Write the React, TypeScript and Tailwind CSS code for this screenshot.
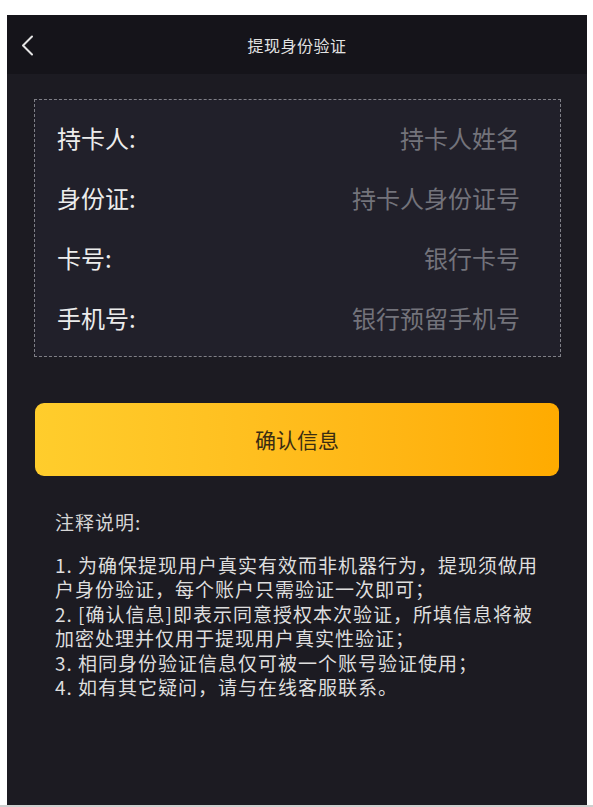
const font = { fontFamily: '"Noto Sans CJK SC", "Noto Sans", sans-serif' };

const fields = [
  { label: "持卡人:", placeholder: "持卡人姓名" },
  { label: "身份证:", placeholder: "持卡人身份证号" },
  { label: "卡号:", placeholder: "银行卡号" },
  { label: "手机号:", placeholder: "银行预留手机号" },
];

const notes = [
  "1. 为确保提现用户真实有效而非机器行为，提现须做用户身份验证，每个账户只需验证一次即可；",
  "2. [确认信息]即表示同意授权本次验证，所填信息将被加密处理并仅用于提现用户真实性验证；",
  "3. 相同身份验证信息仅可被一个账号验证使用；",
  "4. 如有其它疑问，请与在线客服联系。",
];

const BackIcon = () => (
  <svg width="13" height="21" viewBox="0 0 13 21" fill="none">
    <polyline
      points="11,1.5 2,10.5 11,19.5"
      stroke="#e4e4e4"
      strokeWidth="2"
      strokeLinecap="round"
      strokeLinejoin="round"
    />
  </svg>
);

export default function App() {
  return (
    <div className="w-[593px] h-[807px] bg-white flex flex-col overflow-hidden" style={font}>
      <div className="flex-1 pt-[15px] pl-[7px] pr-[6px]">
        <div className="h-[790px] bg-[#1c1b22] flex flex-col">
          {/* header */}
          <div className="h-[59px] bg-[#15141a] relative flex items-center justify-center">
            <button className="absolute left-[14px] top-[20px]">
              <BackIcon />
            </button>
            <span className="text-[16px] text-[#e2e2e2] tracking-[0.5px]">提现身份验证</span>
          </div>

          <div className="pl-[27px] pr-[26px] pt-[25px]">
            {/* form box */}
            <div className="h-[258px] border border-dashed border-[#7f7f86] bg-[#21202a] pl-[22px] pr-[40px] py-[8px] flex flex-col">
              {fields.map((f) => (
                <div key={f.label} className="h-[60px] flex items-center justify-between text-[24px]">
                  <span className="text-[#ececec]">{f.label}</span>
                  <span className="text-[#73737b]">{f.placeholder}</span>
                </div>
              ))}
            </div>

            {/* confirm */}
            <button className="mt-[46px] ml-[1px] w-[524px] h-[73px] rounded-[9px] bg-linear-to-r from-[#ffcd2c] to-[#ffab00] flex items-center justify-center">
              <span className="text-[21px] text-[#3a2c12]">确认信息</span>
            </button>

            {/* notes */}
            <div className="mt-[34px] pl-[21px] pr-[12px] text-[19px] leading-[24.5px] tracking-[1px] text-[#dedede]">
              <p className="text-[#d6d6d6]">注释说明:</p>
              <div className="mt-[18px]">
                {notes.map((n) => (
                  <p key={n}>{n}</p>
                ))}
              </div>
            </div>
          </div>
        </div>
      </div>
      <div className="h-[2px] bg-[#cfcfcf]" />
    </div>
  );
}
